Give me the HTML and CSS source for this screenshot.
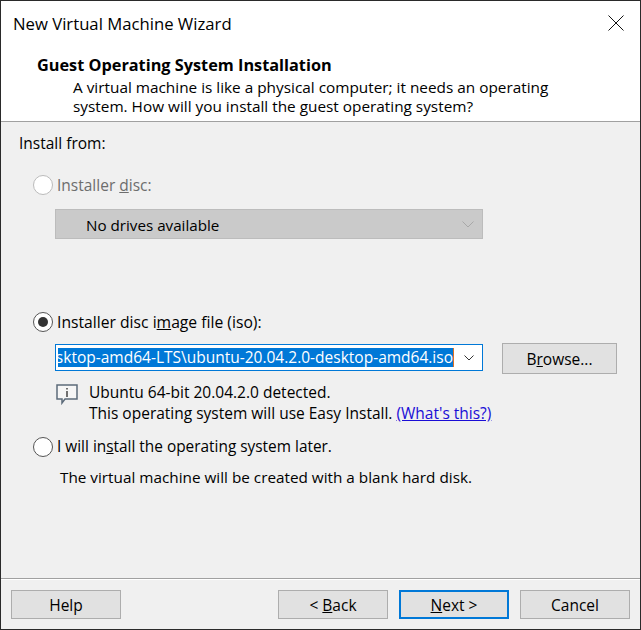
FILE: index.html
```html
<!DOCTYPE html>
<html lang="en">
<head>
<meta charset="utf-8">
<title>New Virtual Machine Wizard</title>
<link rel="stylesheet" href="styles.css">
</head>
<body>
<div class="window">
  <header class="head">
    <div class="titlebar">
      <span class="title">New Virtual Machine Wizard</span>
      <svg class="close" width="16" height="16" viewBox="0 0 16 16"><path d="M.5.5l15 15M15.500.5l-15 15" stroke="#111" fill="none"/></svg>
    </div>
    <h1 class="heading">Guest Operating System Installation</h1>
    <p class="desc">A virtual machine is like a physical computer; it needs an operating<br>system. How will you install the guest operating system?</p>
  </header>
  <main class="content">
    <div class="label from">Install from:</div>
    <div class="option disabled first"><span class="radio"></span><span>Installer <u>d</u>isc:</span></div>
    <div class="select">
      <span class="select-text">No drives available</span>
      <svg width="12" height="7" viewBox="0 0 12 7"><path d="M.5.500l5.500 5.500l5.500-5.500" stroke="#a8a8a8" fill="none"/></svg>
    </div>
    <div class="option second"><span class="radio on"></span><span>Installer disc i<u>m</u>age file (iso):</span></div>
    <div class="iso-row">
      <div class="combo">
        <div class="combo-field"><span class="selected">desktop-amd64-LTS\ubuntu-20.04.2.0-desktop-amd64.iso</span></div>
        <svg width="10" height="6" viewBox="0 0 10 6"><path d="M.5.500l4.500 4.500l4.500-4.500" stroke="#333" fill="none"/></svg>
      </div>
      <div class="btn browse">B<u>r</u>owse...</div>
    </div>
    <div class="detect">
      <svg class="info" width="22" height="22" viewBox="0 0 22 22"><path d="M1 2h20v14H9l-3 4v-4H1z" fill="#f6f6f6" stroke="#5c6b7a" stroke-width="1.500"/><path d="M11 5v1.500M11 8v6" stroke="#444" stroke-width="1.500"/></svg>
      <div class="detect-text">Ubuntu 64-bit 20.04.2.0 detected.<br>This operating system will use Easy Install. <a href="#">(What's this?)</a></div>
    </div>
    <div class="option third"><span class="radio"></span><span>I will in<u>s</u>tall the operating system later.</span></div>
    <div class="label blank">The virtual machine will be created with a blank hard disk.</div>
  </main>
  <footer class="foot">
    <div class="btn"><span>Help</span></div>
    <div class="nav">
      <div class="btn">&lt; <u>B</u>ack</div>
      <div class="btn primary"><u>N</u>ext &gt;</div>
      <div class="btn">Cancel</div>
    </div>
  </footer>
</div>
</body>
</html>
```
FILE: styles.css
```css
* { box-sizing: border-box; }
html, body { margin: 0; padding: 0; }
body { width: 641px; height: 630px; overflow: hidden; font-family: "Open Sans", "Noto Sans", sans-serif; font-size: 15.5px; line-height: 20px; color: #000; background: #f0f0f0; }
.window { width: 641px; height: 630px; border: 1px solid #2a2a2a; display: flex; flex-direction: column; }
.head { height: 121px; background: #fff; border-bottom: 1px solid #a0a0a0; flex: none; padding: 0 0 0 12px; }
.titlebar { height: 46px; display: flex; justify-content: space-between; align-items: center; padding-right: 16px; }
.title { font-size: 16.7px; }
.close { display: block; margin-bottom: 2px; }
.heading { margin: 8px 0 0 24px; font-size: 16.3px; line-height: 20px; font-weight: 700; }
.desc { margin: 3px 0 0 60px; font-size: 15.35px; line-height: 19px; }
.content { flex: 1; padding: 0 0 0 18px; border-bottom: 1px solid #a0a0a0; }
.label.from { margin-top: 11px; }
.option { display: flex; align-items: center; gap: 4px; margin-left: 14px; height: 20px; }
.option.first { margin-top: 22px; }
.option.second { margin-top: 73px; font-size: 15.7px; }
.option.third { margin-top: 13px; font-size: 15.4px; }
.disabled { color: #6d6d6d; }
.radio { width: 20px; height: 20px; border-radius: 50%; border: 1px solid #555; background: #fff; display: block; flex: none; position: relative; }
.disabled .radio { border-color: #bbb; }
.radio.on::after { content: ""; position: absolute; left: 4px; top: 4px; width: 10px; height: 10px; border-radius: 50%; background: #333; }
.select { width: 428px; height: 30px; margin: 14px 0 0 36px; background: #cacaca; border: 1px solid #bcbcbc; display: flex; align-items: center; justify-content: space-between; padding: 0 8px 0 30px; }
.select-text { font-size: 15.2px; padding-top: 2px; }
.iso-row { display: flex; align-items: flex-start; margin: 11px 0 0 36px; }
.combo { width: 428px; height: 27px; margin-top: 1px; background: #fff; border: 1px solid #0078d7; display: flex; align-items: center; justify-content: space-between; padding: 0 8px 0 2px; }
.combo-field { width: 396px; height: 19px; line-height: 19px; overflow: hidden; display: flex; justify-content: flex-end; flex: none; }
.selected { background: #0078d7; color: #fff; white-space: nowrap; flex: none; border-right: 1px solid #e07020; }
.btn { width: 110px; height: 29px; background: #e1e1e1; border: 1px solid #adadad; display: flex; align-items: center; justify-content: center; flex: none; white-space: pre; }
.browse { width: 115px; height: 31px; margin-left: 19px; }
.detect { display: flex; gap: 11px; margin: 8px 0 0 37px; }
.info { display: block; margin-top: 1px; flex: none; }
.detect-text { line-height: 21px; }
a { color: #1a0dd6; }
.blank { margin: 10px 0 0 41px; font-size: 15.3px; }
.foot { height: 50px; flex: none; border-top: 1px solid #fff; padding: 10px 10px 0 10px; display: flex; justify-content: space-between; align-items: flex-start; }
.nav { display: flex; gap: 11px; }
.primary { border: 2px solid #0078d7; }
```
